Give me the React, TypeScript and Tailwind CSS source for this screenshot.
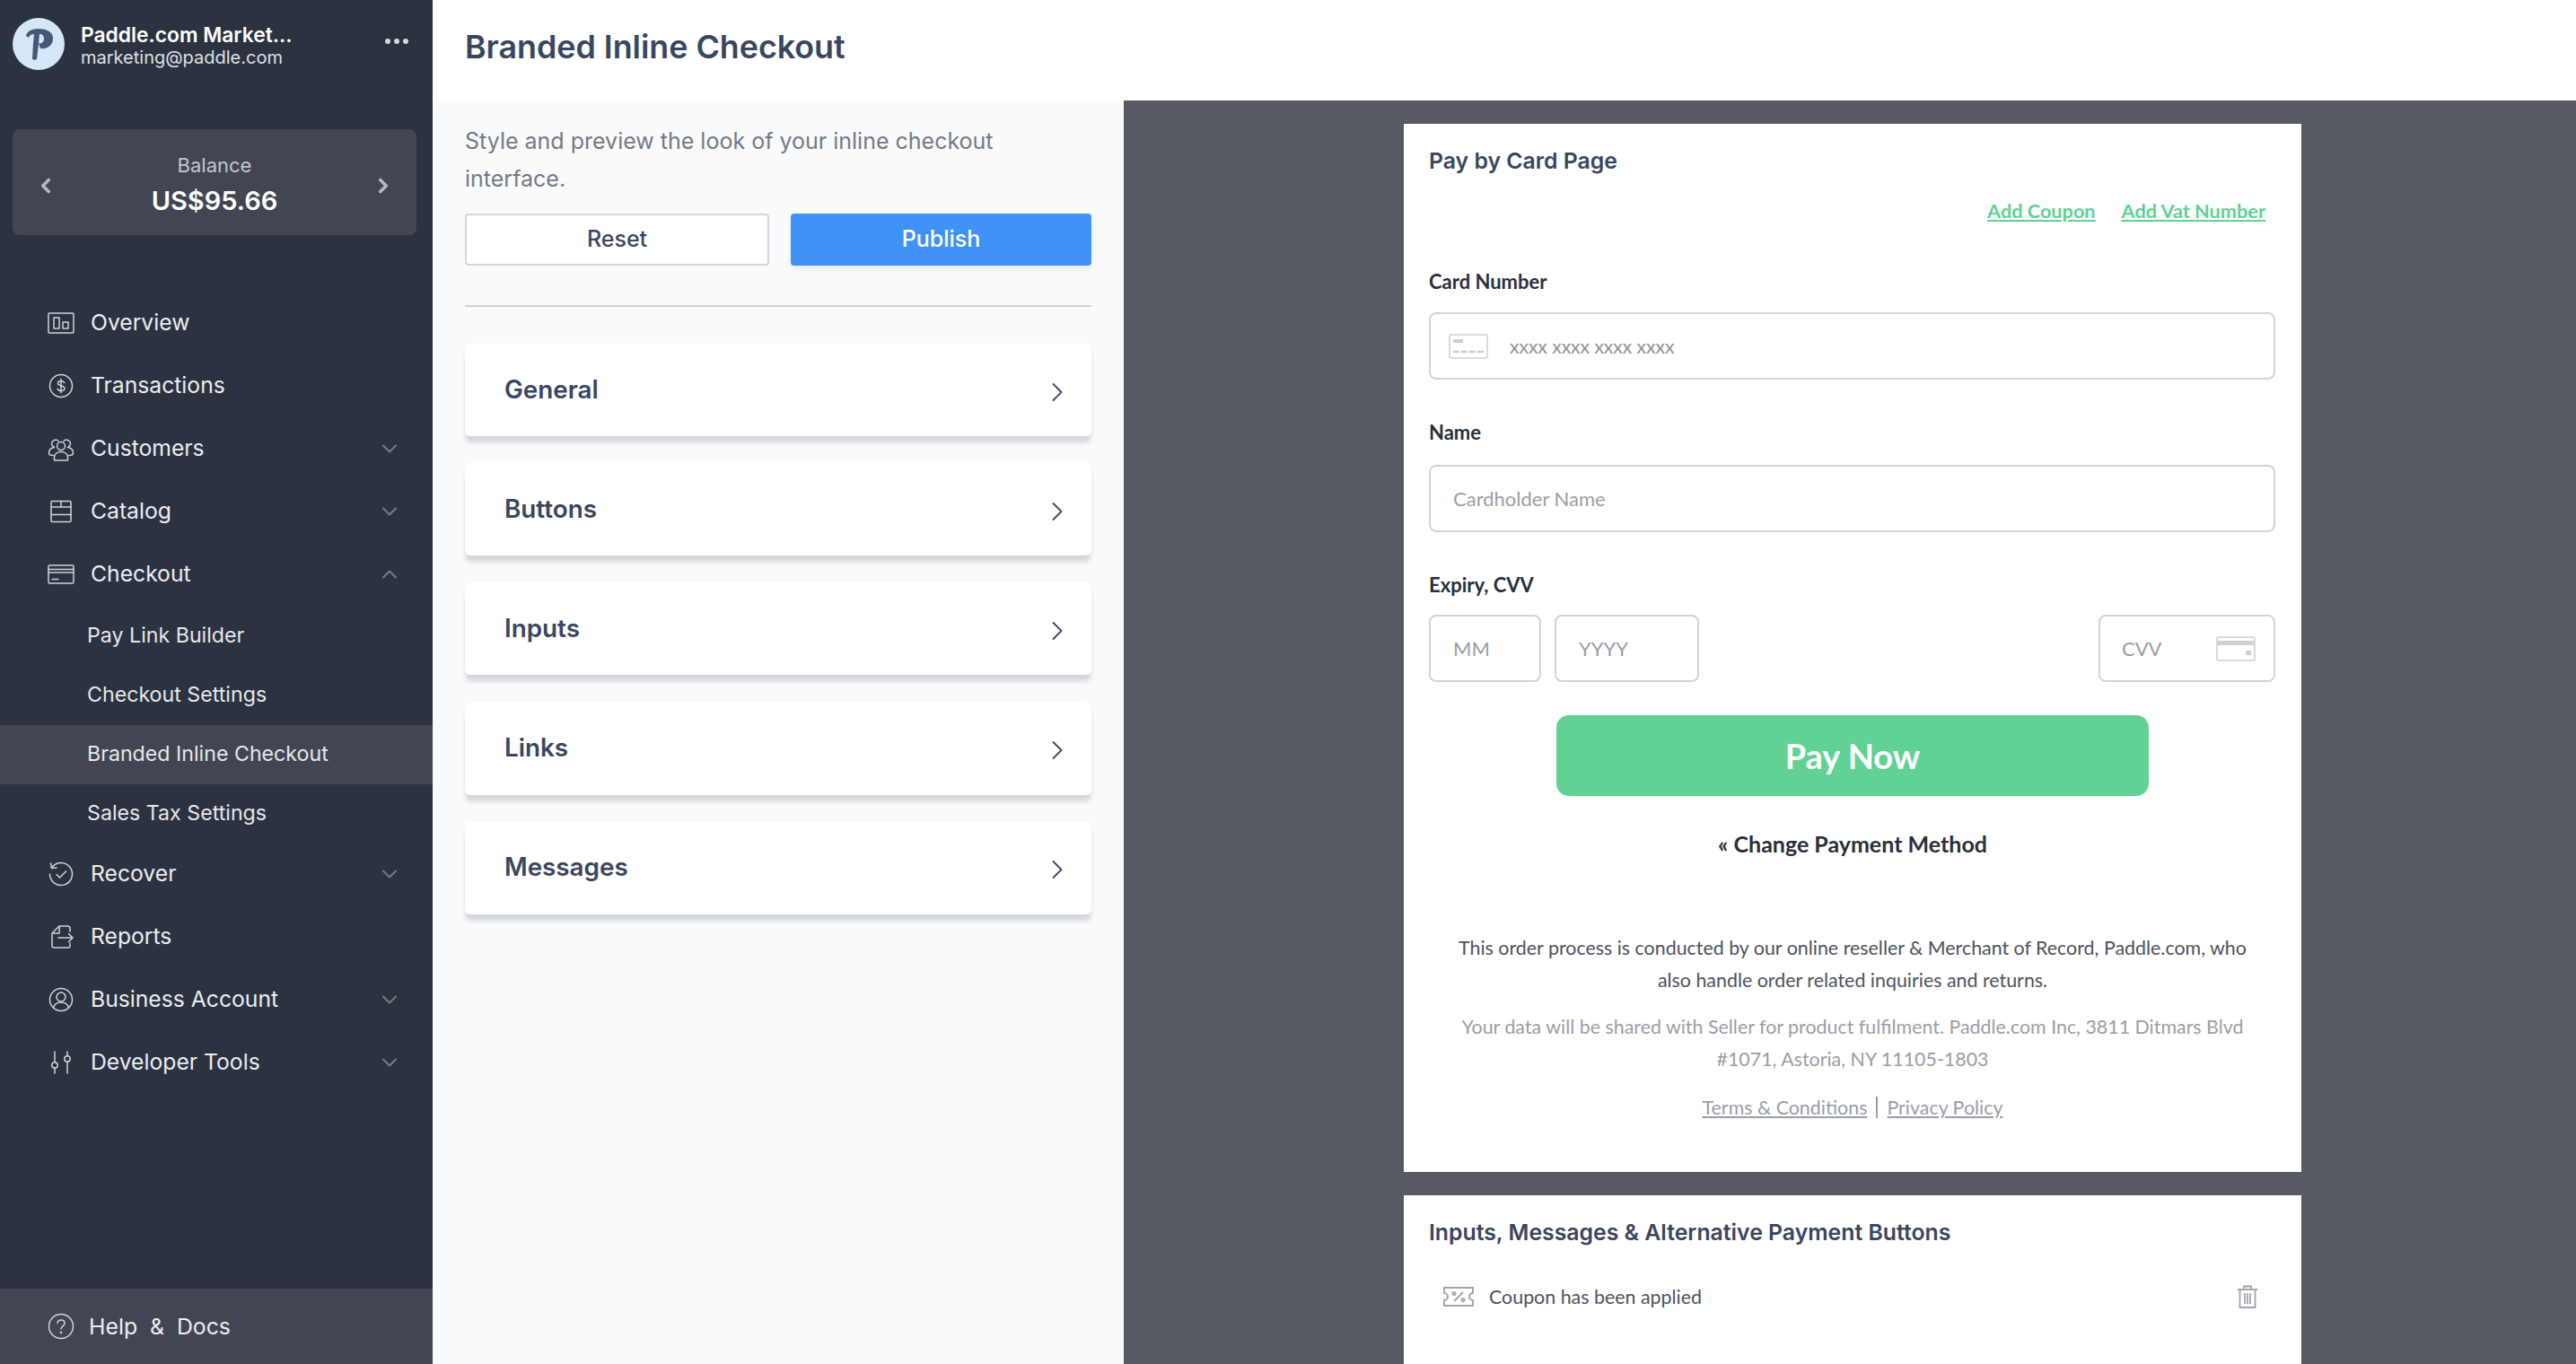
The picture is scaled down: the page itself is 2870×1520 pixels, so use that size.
import { ChevronDown, ChevronLeft, ChevronRight, ChevronUp } from "lucide-react";
import type { ReactNode } from "react";

const Ico = ({ children }: { children: ReactNode }) => (
  <svg viewBox="0 0 30 30" fill="none" stroke="#d0d3d8" strokeWidth="1.5" strokeLinecap="round" strokeLinejoin="round" className="h-[30px] w-[30px] shrink-0">
    {children}
  </svg>
);

const icons: Record<string, ReactNode> = {
  overview: (
    <Ico>
      <rect x="1" y="4" width="28" height="22" rx="1" />
      <rect x="7" y="9" width="6" height="12" />
      <rect x="17" y="14" width="6" height="7" />
    </Ico>
  ),
  transactions: (
    <Ico>
      <circle cx="15" cy="15" r="12.5" />
      <path d="M18.5 11.5c-.5-1.5-2-2-3.5-2-2 0-3.5 1-3.5 2.700 0 3.600 7.500 1.800 7.500 5.500 0 1.800-1.700 2.800-4 2.800-1.700 0-3.300-.8-3.800-2.300M15 7.500v15" />
    </Ico>
  ),
  customers: (
    <Ico>
      <circle cx="15" cy="12" r="4.500" />
      <path d="M7.500 28v-3c0-4 3-6.500 7.500-6.500s7.500 2.500 7.500 6.500v3z" />
      <path d="M12 6.500A4.300 4.300 0 1 0 7.500 13.500C4 14 1.500 16 1.500 20c0 1.500 2 2.500 5 2.500M18 6.500A4.300 4.300 0 1 1 22.500 13.500C26 14 28.500 16 28.500 20c0 1.500-2 2.500-5 2.500" />
    </Ico>
  ),
  catalog: (
    <Ico>
      <rect x="4" y="3.500" width="22" height="23" rx="1" />
      <path d="M4 10h22M4 18.500h22M15 3.500V10" />
    </Ico>
  ),
  checkout: (
    <Ico>
      <rect x="1" y="5" width="28" height="20" rx="1.500" />
      <path d="M1 9.500h28M1 13h28M5 20.500h7" />
    </Ico>
  ),
  recover: (
    <Ico>
      <path d="M5 7.500A12.500 12.500 0 1 1 2.500 15M3.500 3l1 5.500 5.500-.5" />
      <path d="M10 15.500l3.500 3.500 7-7" />
    </Ico>
  ),
  reports: (
    <Ico>
      <path d="M25 9V6a3 3 0 0 0-3-3h-9L5 11v14a2 2 0 0 0 2 2h16a2 2 0 0 0 2-2v-3M13 3v8H5" />
      <path d="M12 16h16M23.500 11.500L28 16l-4.500 4.500" />
    </Ico>
  ),
  account: (
    <Ico>
      <circle cx="15" cy="15" r="12.500" />
      <circle cx="15" cy="12" r="5" />
      <path d="M6.500 24c1-4 4-6 8.500-6s7.500 2 8.500 6" />
    </Ico>
  ),
  tools: (
    <Ico>
      <circle cx="8" cy="18" r="3.200" />
      <circle cx="22" cy="11" r="3.200" />
      <path d="M8 3v12M8 21.200V27M22 3v4.800M22 14.200V27" />
    </Ico>
  ),
  help: (
    <Ico>
      <circle cx="15" cy="15" r="13.500" />
      <path d="M11 11.500c.3-2.300 2-3.500 4-3.500 2.300 0 4 1.500 4 3.500 0 3.200-4 3-4 6.500" />
      <circle cx="15" cy="22" r=".6" />
    </Ico>
  ),
};

const nav1 = [
  { label: "Overview", icon: "overview" },
  { label: "Transactions", icon: "transactions" },
  { label: "Customers", icon: "customers", more: true },
  { label: "Catalog", icon: "catalog", more: true },
];
const nav2 = [
  { label: "Recover", icon: "recover", more: true },
  { label: "Reports", icon: "reports" },
  { label: "Business Account", icon: "account", more: true },
  { label: "Developer Tools", icon: "tools", more: true },
];
const subItems = ["Pay Link Builder", "Checkout Settings", "Branded Inline Checkout", "Sales Tax Settings"];
const sections = ["General", "Buttons", "Inputs", "Links", "Messages"];

const NavRow = ({ label, icon, more, open }: { label: string; icon: string; more?: boolean; open?: boolean }) => (
  <div className="flex h-[70px] items-center pl-[53px] pr-[34px]">
    {icons[icon]}
    <span className="ml-[18px] flex-1 text-[24.7px] text-[#eceef0]">{label}</span>
    {more && (open ? <ChevronUp size={28} color="#767b86" strokeWidth={1.8} /> : <ChevronDown size={28} color="#767b86" strokeWidth={1.8} />)}
  </div>
);

const Sidebar = () => (
  <aside className="flex h-[1520px] w-[482px] shrink-0 flex-col bg-[#2b3240] font-['Inter',sans-serif]">
    <div className="flex items-center pl-[14px] pr-[27px] pt-[20px]">
      <svg viewBox="0 0 58 58" className="h-[58px] w-[58px] shrink-0">
        <circle cx="29" cy="29" r="29" fill="#d5e6f8" />
        <path d="M15 20c1-5 6-8 14-8 10 0 16 4 16 11 0 8-7 12-14 11l-2-6c3 1 6-1 6-5 0-3-2-5-5-5l-1 11-2 17c-2 1-5 1-5-1l1-17 1-10c-3 0-5 1-6 4z" fill="#465878" />
      </svg>
      <div className="ml-[18px] flex-1 pt-[3px]">
        <div className="text-[22.8px] font-semibold leading-[27px] text-white">Paddle.com Market...</div>
        <div className="text-[20px] leading-[24px] text-[#dfe1e5]">marketing@paddle.com</div>
      </div>
      <div className="mb-[7px] flex gap-[4px]">
        <span className="h-[6px] w-[6px] rounded-full bg-[#d5d7db]" />
        <span className="h-[6px] w-[6px] rounded-full bg-[#d5d7db]" />
        <span className="h-[6px] w-[6px] rounded-full bg-[#d5d7db]" />
      </div>
    </div>

    <div className="ml-[14px] mr-[18px] mt-[66px] flex h-[118px] items-center justify-between rounded-[8px] bg-[#414652] px-[24px]">
      <ChevronLeft size={26} color="#b4b7bd" strokeWidth={3.4} className="mt-[8px]" />
      <div className="pt-[4px] text-center">
        <div className="text-[22px] leading-[30px] text-[#c4c6cb]">Balance</div>
        <div className="mt-[7px] text-[29px] font-semibold leading-[36px] text-white">US$95.66</div>
      </div>
      <ChevronRight size={26} color="#b4b7bd" strokeWidth={3.4} className="mt-[8px]" />
    </div>

    <nav className="mt-[63px]">
      {nav1.map((n) => (
        <NavRow key={n.label} {...n} />
      ))}
      <NavRow label="Checkout" icon="checkout" more open />
      <div className="-mb-[1px] mt-[1px]">
        {subItems.map((s) => (
          <div
            key={s}
            className={`flex h-[66px] items-center pb-[2px] pl-[97px] text-[23.2px] text-[#e6e8eb] ${s === "Branded Inline Checkout" ? "bg-[#414652]" : ""}`}
          >
            {s}
          </div>
        ))}
      </div>
      {nav2.map((n) => (
        <NavRow key={n.label} {...n} />
      ))}
    </nav>

    <div className="mt-auto flex h-[84px] items-center bg-[#414652] pl-[53px]">
      {icons.help}
      <span className="ml-[16px] whitespace-pre pt-[2px] text-[24.8px] text-[#eceef0]">Help  &  Docs</span>
    </div>
  </aside>
);

const ControlPanel = () => (
  <div className="h-full w-[770px] shrink-0 bg-[#f9fafb] pl-[36px] pr-[36px] pt-[24px] font-['Inter',sans-serif]">
    <p className="text-[25px] leading-[42px] text-[#737a87]">Style and preview the look of your inline checkout interface.</p>
    <div className="mt-[18px] flex gap-[24px]">
      <button className="h-[58px] flex-1 rounded-[4px] border-2 border-[#d3d5d9] bg-white pb-[1px] text-[25px] font-medium text-[#3a4660]">Reset</button>
      <button className="h-[58px] flex-1 rounded-[4px] bg-[#3f93f7] pb-[1px] text-[25px] font-medium text-white shadow-[0_3px_6px_rgba(0,0,0,0.08)]">Publish</button>
    </div>
    <hr className="mt-[44px] border-t-2 border-[#cfd1d6]" />
    <div className="mt-[41px] flex flex-col gap-[30.2px]">
      {sections.map((s) => (
        <div key={s} className="flex h-[103px] items-center justify-between rounded-[6px] bg-white pl-[44px] pr-[20px] shadow-[0_8px_5px_-1px_rgba(60,70,90,0.2)]">
          <span className="text-[27.8px] font-semibold text-[#3a4660]">{s}</span>
          <ChevronRight size={36} color="#3a4660" strokeWidth={1.2} className="mt-[4px]" />
        </div>
      ))}
    </div>
  </div>
);

const Label = ({ children, className = "" }: { children: ReactNode; className?: string }) => (
  <div className={`text-[22px] font-bold leading-[28px] text-[#2a2f3a] ${className}`}>{children}</div>
);

const inputBox = "flex h-[75px] items-center rounded-[8px] border-2 border-[#d3d4d8] bg-white text-[22px] text-[#9a9ea8]";

const CheckoutPreview = () => (
  <div className="flex h-full flex-1 flex-col items-center overflow-hidden bg-[#585a63] pt-[26px]">
    <div className="ml-[6px] h-[1168px] w-[1000px] shrink-0 bg-white px-[28px] pt-[26px] font-['Lato',sans-serif]">
      <h3 className="font-['Inter',sans-serif] text-[24.8px] font-semibold leading-[30px] text-[#3a4660]">Pay by Card Page</h3>
      <div className="mr-[12px] mt-[27px] flex justify-end gap-[29px] text-[21.7px] font-bold leading-[28px] text-[#61d194] underline">
        <a>Add Coupon</a>
        <a>Add Vat Number</a>
      </div>
      <Label className="mt-[51px]">Card Number</Label>
      <div className={`${inputBox} mt-[20px] w-[943px] pl-[20px]`}>
        <svg viewBox="0 0 44 28" className="h-[28px] w-[44px]" fill="none">
          <rect x="1" y="1" width="42" height="26" rx="1.500" stroke="#cfd0d5" strokeWidth="1.500" />
          <rect x="5" y="6" width="11" height="4" fill="#cfd0d5" />
          <path d="M5 20h34" stroke="#cfd0d5" strokeWidth="2.500" strokeDasharray="7 2" />
        </svg>
        <span className="ml-[24px] text-[21px] text-[#8d919b]">xxxx xxxx xxxx xxxx</span>
      </div>
      <Label className="mt-[45px]">Name</Label>
      <div className={`${inputBox} mt-[22px] w-[943px] pl-[25px]`}>Cardholder Name</div>
      <Label className="mt-[45px]">Expiry, CVV</Label>
      <div className="mt-[19px] flex w-[943px] gap-[15px]">
        <div className={`${inputBox} w-[125px] pl-[25px]`}>MM</div>
        <div className={`${inputBox} w-[161px] pl-[25px]`}>YYYY</div>
        <div className={`${inputBox} ml-auto w-[197px] justify-between pl-[24px] pr-[20px]`}>
          CVV
          <svg viewBox="0 0 44 28" className="h-[28px] w-[44px]" fill="none">
            <rect x="1" y="1" width="42" height="26" rx="1.500" stroke="#cfd0d5" strokeWidth="1.500" />
            <rect x="1" y="5" width="42" height="5" fill="#cfd0d5" />
            <rect x="33" y="16" width="6" height="5" fill="#cfd0d5" />
          </svg>
        </div>
      </div>
      <button className="mx-auto mt-[37px] block h-[90px] w-[660px] rounded-[14px] bg-[#61d194] text-[38px] font-bold text-white">Pay Now</button>
      <div className="mt-[37px] text-center text-[25px] font-bold leading-[32px] text-[#2a2f3a]">« Change Payment Method</div>
      <div className="mt-[82px] text-center text-[21.4px] leading-[36px] text-[#4c5260]">
        <p className="mx-auto w-[900px]">This order process is conducted by our online reseller & Merchant of Record, Paddle.com, who also handle order related inquiries and returns.</p>
        <p className="mx-auto mt-[16px] w-[900px] text-[#9a9ea8]">Your data will be shared with Seller for product fulfilment. Paddle.com Inc, 3811 Ditmars Blvd #1071, Astoria, NY 11105-1803</p>
        <div className="mt-[18px] flex items-center justify-center text-[#9a9ea8]">
          <a className="underline">Terms & Conditions</a>
          <span className="mx-[10px] h-[24px] w-[2px] bg-[#9a9ea8]" />
          <a className="underline">Privacy Policy</a>
        </div>
      </div>
    </div>
    <div className="ml-[6px] mt-[26px] w-[1000px] flex-1 bg-white px-[28px] pt-[26px] font-['Lato',sans-serif]">
      <h3 className="font-['Inter',sans-serif] text-[24.8px] font-semibold leading-[30px] text-[#3a4660]">Inputs, Messages & Alternative Payment Buttons</h3>
      <div className="mt-[41px] flex items-center pl-[16px] pr-[20px]">
        <svg viewBox="0 0 34 22" className="h-[22px] w-[34px]" fill="none" stroke="#a3a6ae" strokeWidth="2">
          <path d="M1 1h32v6a4 4 0 0 0 0 8v6H1v-6a4 4 0 0 0 0-8z" />
          <path d="M22 6L12 16" />
          <circle cx="12" cy="7.500" r="1.500" />
          <circle cx="22" cy="14.500" r="1.500" />
        </svg>
        <span className="ml-[17px] flex-1 text-[21.4px] text-[#4c5260]">Coupon has been applied</span>
        <svg viewBox="0 0 24 26" className="h-[26px] w-[24px]" fill="none" stroke="#a3a6ae" strokeWidth="1.800">
          <path d="M1 5h22M8 5V1.500h8V5M3.500 5v20h17V5M9 9v12M12 9v12M15 9v12" />
        </svg>
      </div>
    </div>
  </div>
);

export default function App() {
  return (
    <div className="flex h-[1520px] w-[2870px] overflow-hidden bg-white">
      <Sidebar />
      <main className="flex min-w-0 flex-1 flex-col">
        <header className="flex h-[112px] shrink-0 items-center bg-white pb-[6px] pl-[36px]">
          <h1 className="font-['Inter',sans-serif] text-[35.8px] font-semibold text-[#3a4660]">Branded Inline Checkout</h1>
        </header>
        <div className="flex h-[1408px]">
          <ControlPanel />
          <CheckoutPreview />
        </div>
      </main>
    </div>
  );
}
